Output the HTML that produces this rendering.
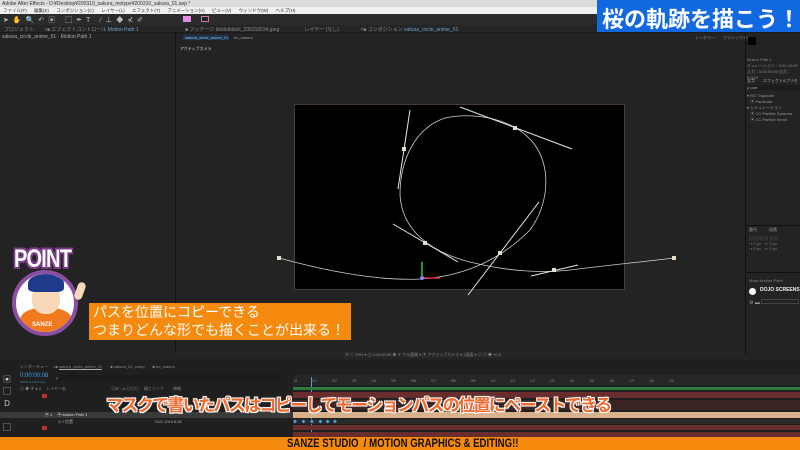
<!DOCTYPE html>
<html><head><meta charset="utf-8"><style>
*{margin:0;padding:0;box-sizing:border-box}
body{width:800px;height:450px;overflow:hidden;background:#232323;font-family:"Liberation Sans","Noto Sans CJK JP",sans-serif;position:relative;color:#999;font-size:5px}
.a{position:absolute}
</style></head><body>
<div class="a" style="left:0;top:0;width:800px;height:7px;background:#dcdcdc"></div>
<div class="a" style="left:2px;top:1px;font-size:5px;color:#333">Adobe After Effects - D:¥Desktop¥200310_sakura_motype¥200310_sakura_01.aep *</div>
<div class="a" style="left:0;top:7px;width:800px;height:7px;background:#f0f0f0"></div>
<div class="a" style="left:3px;top:8px;font-size:4.5px;color:#333;word-spacing:6px">ファイル(F) 編集(E) コンポジション(C) レイヤー(L) エフェクト(T) アニメーション(A) ビュー(V) ウィンドウ(W) ヘルプ(H)</div>
<div class="a" style="left:0;top:14px;width:800px;height:11px;background:#2b2b2b"></div>
<div class="a" style="left:3px;top:15px;font-size:7px;color:#bbb;letter-spacing:4px">➤✋🔍↶▣ ▢✒T ∕⊥◆⊀✐</div>
<div class="a" style="left:183px;top:16px;width:8px;height:6px;background:#e58ce0"></div>
<div class="a" style="left:201px;top:16px;width:8px;height:6px;border:1px solid #c7a;background:#222"></div>
<div class="a" style="left:0;top:25px;width:800px;height:8px;background:#252525;border-bottom:1px solid #1a1a1a"></div>
<div class="a" style="left:4px;top:26px;color:#888">プロジェクト　　×■ エフェクトコントロール <span style="color:#6aa0d0">Motion Path 1</span></div>
<div class="a" style="left:185px;top:26px;color:#888">■ フッテージ kboletblack_235310034.jpeg　　　　　レイヤー (なし)　　　　 ×■ コンポジション <span style="color:#6aa0d0">sakura_circle_anime_01</span></div>
<div class="a" style="left:2px;top:34px;color:#aaa">sakura_circle_anime_01 · Motion Path 1</div>
<div class="a" style="left:175px;top:33px;width:1px;height:322px;background:#111"></div>
<div class="a" style="left:183px;top:35px;width:46px;height:5px;background:#1d3550;color:#9bc;font-size:4px;padding-left:2px">sakura_circle_anime_01</div>
<div class="a" style="left:234px;top:35px;color:#999;font-size:4px">bo_sakura</div>
<div class="a" style="left:180px;top:46px;color:#ddd;font-size:4px">アクティブカメラ</div>
<div class="a" style="left:695px;top:35px;color:#888;font-size:4px">レンダラー：　クラシック3D</div>
<div class="a" style="left:745px;top:33px;width:1px;height:322px;background:#111"></div>
<div class="a" style="left:748px;top:37px;width:8px;height:8px;background:#000"></div>
<div class="a" style="left:747px;top:57px;color:#888;font-size:4px;line-height:6px">Motion Path 1<br>デュレーション：0:00:10:00<br>入力：0:00:00:00 出力：0:00:0</div>
<div class="a" style="left:747px;top:78px;color:#aaa;font-size:4px">文字　　エフェクト&amp;プリセ</div>
<div class="a" style="left:747px;top:85px;width:53px;height:5px;background:#1c1c1c;color:#aaa;font-size:4px">ρ part</div>
<div class="a" style="left:747px;top:93px;color:#999;font-size:4px;line-height:6px">▾ RG Trapcode<br>&nbsp;&nbsp;&nbsp;▣ Particular<br>▾ シミュレーション<br>&nbsp;&nbsp;&nbsp;▣ CC Particle Systems<br>&nbsp;&nbsp;&nbsp;▣ CC Particle World</div>
<div class="a" style="left:745px;top:225px;width:55px;height:1px;background:#111"></div>
<div class="a" style="left:749px;top:227px;color:#999;font-size:4px">整列　　　段落</div>
<div class="a" style="left:749px;top:236px;color:#777;font-size:4px;line-height:5px">▤ ▤ ▤ ▤ ▤ ▤<br>⇥ 0 px　⇤ 0 px<br>⇥ 0 px　⇤ 0 px</div>
<div class="a" style="left:745px;top:272px;width:55px;height:1px;background:#111"></div>
<div class="a" style="left:749px;top:278px;color:#888;font-size:4px">Move Anchor Point</div>
<div class="a" style="left:749px;top:288px;width:7px;height:7px;border-radius:50%;background:#fff"></div>
<div class="a" style="left:760px;top:287px;color:#eee;font-size:5px;font-weight:bold">DOJO SCREENS</div>
<div class="a" style="left:749px;top:299px;color:#999;font-size:5px">⚙ ▬ <span style="display:inline-block;width:38px;height:5px;border:1px solid #444"></span></div>

<div class="a" style="left:294px;top:104px;width:331px;height:186px;background:#000;border:1px solid #4a3a38"></div>
<svg class="a" style="left:0;top:0" width="800" height="450">
<g fill="none" stroke="#cfcfcf" stroke-width="0.8">
<path d="M279,258 C330,272 380,281 421,279 C470,276 505,255 530,230 C548,205 552,170 535,145 C515,118 475,112 445,118 C415,128 400,160 400,195 C402,230 430,252 470,262 C510,272 545,273 570,270 C610,265 650,261 674,258"/>
</g>
<g stroke="#e8e8e8" stroke-width="1">
<line x1="410" y1="110" x2="398" y2="189"/>
<line x1="460" y1="107" x2="572" y2="149"/>
<line x1="393" y1="224" x2="458" y2="262"/>
<line x1="539" y1="202" x2="468" y2="295"/>
<line x1="531" y1="276" x2="578" y2="265"/>
</g>
<g fill="#eadccc">
<rect x="402" y="147" width="4" height="4"/><rect x="513" y="126" width="4" height="4"/>
<rect x="423" y="241" width="4" height="4"/><rect x="498" y="251" width="4" height="4"/>
<rect x="552" y="268" width="4" height="4"/><rect x="277" y="256" width="4" height="4"/>
<rect x="672" y="256" width="4" height="4"/>
</g>
<line x1="422" y1="278" x2="422" y2="262" stroke="#3c3" stroke-width="1.5"/>
<line x1="422" y1="278" x2="440" y2="278" stroke="#c33" stroke-width="1.5"/>
<circle cx="422" cy="278" r="2" fill="#88f"/>
</svg>
<div class="a" style="left:175px;top:352px;width:570px;height:6px;background:#262626;color:#888;font-size:4px;padding-left:170px">▣ ▽ 50% ▾ ◫ 0:00:00:08 ◉ ⚘ フル画質 ▾ ▣ アクティブカメラ ▾ 1画面 ▾ ▤ ▤ ◆ +0.0</div>

<div class="a" style="left:0;top:360px;width:800px;height:77px;background:#1f1f1f"></div>
<div class="a" style="left:20px;top:364px;color:#888;font-size:4px">レンダーキュー　 ×■ <span style="border-bottom:1px solid #aaa">sakura_circle_anime_01</span>　　■ sakura_01_comp　　■ bo_sakura</div>
<div class="a" style="left:20px;top:373px;color:#4a9fe0;font-size:6px">0:00:00:08</div>
<div class="a" style="left:20px;top:380px;color:#4a7fa0;font-size:3px">00008 (23.976 fps)</div>
<div class="a" style="left:56px;top:375px;width:225px;height:6px;background:#1a1a1a;color:#888;font-size:4px">ρ</div>
<div class="a" style="left:2px;top:374px;width:10px;height:60px;color:#ccc;font-size:8px;line-height:12px;text-align:center">▣<br>▢<br>D<br>G<br>▢</div>
<div class="a" style="left:20px;top:386px;color:#888;font-size:4px">◎ ◆ ▣ ● # 　レイヤー名　　　　　　　　　　　 ◎✲＼fx ◎◎◎　 親とリンク　　 伸縮</div>
<div class="a" style="left:293px;top:375px;width:507px;height:10px;background:#262626"></div>
<div class="a" style="left:294px;top:379px;color:#888;font-size:3.5px;word-spacing:14px">0f 01f 02f 03f 04f 05f 06f 07f 08f 09f 10f 11f 12f 13f 14f 15f 16f 17f 18f 19f</div>
<div class="a" style="left:311px;top:377px;width:1px;height:60px;background:#4a9fe0"></div>
<div class="a" style="left:293px;top:387px;width:507px;height:3px;background:#2e7a3a"></div>
<div class="a" style="left:293px;top:392px;width:507px;height:6px;background:#6a2d2d"></div>
<div class="a" style="left:293px;top:400px;width:507px;height:10px;background:#3a2424"></div>
<div class="a" style="left:293px;top:412px;width:507px;height:6px;background:#d9b08c"></div>
<div class="a" style="left:0;top:412px;width:293px;height:6px;background:#3a3a3a"></div>
<div class="a" style="left:293px;top:419px;width:507px;height:5px;background:#2a2a2a;color:#4a9fe0;font-size:4px">◆&nbsp;&nbsp;&nbsp;&nbsp;◆&nbsp;&nbsp;&nbsp;&nbsp;◆&nbsp;&nbsp;&nbsp;&nbsp;◆&nbsp;&nbsp;&nbsp;◆&nbsp;&nbsp;&nbsp;◆</div>
<div class="a" style="left:293px;top:425px;width:507px;height:5px;background:#6a2d2d"></div>
<div class="a" style="left:293px;top:432px;width:507px;height:5px;background:#6a2d2d"></div>
<div class="a" style="left:42px;top:394px;width:5px;height:4px;background:#b33"></div>
<div class="a" style="left:42px;top:426px;width:5px;height:4px;background:#b33"></div>
<div class="a" style="left:45px;top:412px;color:#ddd;font-size:4px">▣ 1 　▣ Motion Path 1</div>
<div class="a" style="left:58px;top:419px;color:#aaa;font-size:4px">◷ ℓ 位置　　　　　　　　　　　　　　　　　　　　 7422.1019.8.82</div>
<div class="a" style="left:106px;top:391px;white-space:nowrap;font-size:17px;font-weight:bold;color:#f06a30;letter-spacing:-1.65px;text-shadow:-1px -1px 0 #fff,1px -1px 0 #fff,-1px 1px 0 #fff,1px 1px 0 #fff,0 0 2px #fff">マスクで書いたパスはコピーしてモーションパスの位置にペーストできる</div>
<div class="a" style="left:0;top:437px;width:800px;height:13px;background:#f58a0e"></div>
<div class="a" style="left:287px;top:436px;white-space:nowrap;color:#111;font-size:12px;font-weight:bold;line-height:14px;transform:scaleX(0.8);transform-origin:left">SANZE STUDIO &nbsp;/ MOTION GRAPHICS &amp; EDITING!!</div>

<div class="a" style="left:14px;top:245px;font-size:25px;font-weight:bold;color:#fff;letter-spacing:-1px;transform:scaleX(0.8);transform-origin:left;text-shadow:-2px -2px 0 #7b3d8a,2px -2px 0 #7b3d8a,-2px 2px 0 #7b3d8a,2px 2px 0 #7b3d8a">POINT</div>
<div class="a" style="left:12px;top:270px;width:66px;height:66px;border-radius:50%;background:#fff;border:4px solid #8a4fa0;overflow:hidden">
<div class="a" style="left:4px;top:34px;width:52px;height:30px;border-radius:40% 40% 0 0;background:#f07a20"></div>
<div class="a" style="left:16px;top:10px;width:28px;height:30px;border-radius:45%;background:#f8d8b8"></div>
<div class="a" style="left:12px;top:0px;width:36px;height:18px;border-radius:50% 50% 20% 20%;background:#1e3a8a"></div>
<div class="a" style="left:16px;top:48px;color:#fff;font-size:6px;font-weight:bold">SANZE</div>
</div>
<div class="a" style="left:76px;top:282px;width:8px;height:18px;background:#f8d8b8;border-radius:4px;transform:rotate(20deg)"></div>
<div class="a" style="left:89px;top:303px;width:262px;height:37px;background:#f58a0e"></div>
<div class="a" style="left:93px;top:303px;color:#fff;font-size:14px;line-height:18px">パスを位置にコピーできる<br>つまりどんな形でも描くことが出来る！</div>

<div class="a" style="left:597px;top:0;width:203px;height:32px;background:#1268e0"></div>
<div class="a" style="left:602px;top:2px;color:#fff;font-size:22px;font-weight:bold;white-space:nowrap">桜の軌跡を描こう！</div>
</body></html>
